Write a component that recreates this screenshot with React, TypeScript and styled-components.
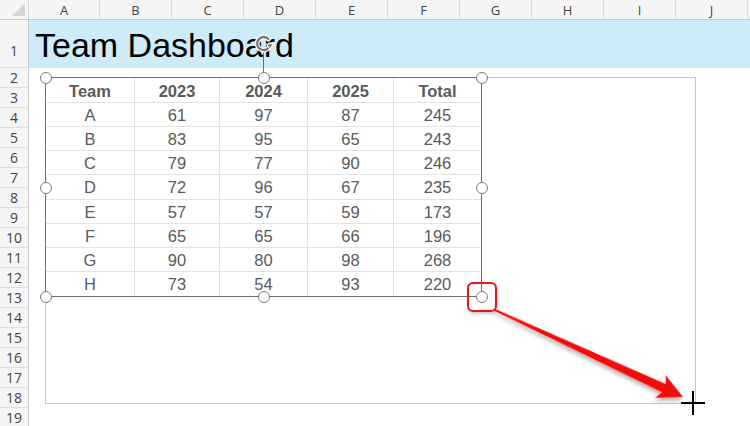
import styled, { createGlobalStyle } from 'styled-components';

const GlobalStyle = createGlobalStyle`
  html, body {
    margin: 0;
    padding: 0;
    background: #ffffff;
    overflow: hidden;
  }
  body {
    font-family: "Liberation Sans", Arial, sans-serif;
  }
  * { box-sizing: border-box; }
`;

const Sheet = styled.div`
  position: relative;
  width: 750px;
  height: 426px;
  overflow: hidden;
  display: flex;
  flex-direction: column;
  background: #ffffff;
`;

const HeaderRow = styled.div`
  display: flex;
  flex: none;
  height: 20px;
  background: #f5f5f5;
  border-bottom: 1px solid #c8c8c8;
`;

const Corner = styled.div`
  position: relative;
  flex: none;
  width: 29px;
  border-right: 1px solid #d6d6d6;

  &::after {
    content: '';
    position: absolute;
    right: 3px;
    bottom: 3px;
    width: 0;
    height: 0;
    border-left: 13px solid transparent;
    border-bottom: 13px solid #d7d7d7;
  }
`;

const ColHead = styled.div<{ $w: number }>`
  flex: none;
  width: ${({ $w }) => $w}px;
  display: flex;
  align-items: center;
  justify-content: center;
  border-right: 1px solid #dcdcdc;
  font-family: "Open Sans", "Noto Sans", sans-serif;
  font-size: 13px;
  color: #444444;
`;

const Row = styled.div<{ $h: number }>`
  display: flex;
  flex: none;
  height: ${({ $h }) => $h}px;
`;

const RowHead = styled.div<{ $tall?: boolean }>`
  flex: none;
  width: 29px;
  display: flex;
  justify-content: center;
  align-items: ${({ $tall }) => ($tall ? 'flex-end' : 'center')};
  padding-bottom: ${({ $tall }) => ($tall ? '7px' : '0')};
  background: #f5f5f5;
  border-right: 1px solid #c8c8c8;
  border-bottom: 1px solid #dedede;
  font-family: "Open Sans", "Noto Sans", sans-serif;
  font-size: 14px;
  line-height: 18px;
  color: #444444;
`;

const RowBody = styled.div<{ $fill?: string }>`
  flex: 1;
  display: flex;
  align-items: flex-end;
  background: ${({ $fill }) => $fill ?? '#ffffff'};
`;

const Title = styled.div`
  padding: 0 0 3px 6px;
  font-family: "Liberation Sans", Arial, sans-serif;
  font-size: 34px;
  line-height: 39px;
  color: #000000;
  white-space: nowrap;
`;

/* the outline Excel shows while the picture is dragged bigger */
const DragOutline = styled.div`
  position: absolute;
  left: 45px;
  top: 77px;
  width: 651px;
  height: 327px;
  border: 1px solid #c6c6c6;
`;

const Picture = styled.div`
  position: absolute;
  left: 45px;
  top: 77px;
  width: 437px;
  height: 220px;
  border: 1px solid #6e6e6e;
  background: #ffffff;
  display: grid;
  grid-template-columns: 89px 85px 88px 86px 1fr;
  grid-template-rows: 25px repeat(8, 1fr);
`;

const Cell = styled.div<{ $head?: boolean; $lastCol?: boolean; $lastRow?: boolean }>`
  display: flex;
  align-items: center;
  justify-content: center;
  padding-top: 2px;
  border-right: ${({ $lastCol }) => ($lastCol ? 'none' : '1px solid #e3e3e3')};
  border-bottom: ${({ $lastRow }) => ($lastRow ? 'none' : '1px solid #e3e3e3')};
  font-family: "Liberation Sans", Arial, sans-serif;
  font-size: 16.5px;
  font-weight: ${({ $head }) => ($head ? 700 : 400)};
  color: #5a5a5a;
`;

const Handle = styled.div<{ $x: number; $y: number }>`
  position: absolute;
  left: ${({ $x }) => $x - 5.5}px;
  top: ${({ $y }) => $y - 5.5}px;
  width: 12px;
  height: 12px;
  border-radius: 50%;
  border: 1.6px solid #7c7c7c;
  background: #ffffff;
`;

const RotateStem = styled.div`
  position: absolute;
  left: 263px;
  top: 50px;
  width: 1px;
  height: 27px;
  background: #6e6e6e;
`;

const RotateIcon = styled.svg`
  position: absolute;
  left: 253px;
  top: 33px;
  width: 21px;
  height: 21px;
  overflow: visible;
`;

const HighlightBox = styled.div`
  position: absolute;
  left: 467px;
  top: 282px;
  width: 30px;
  height: 30px;
  border: 2px solid #e8141b;
  border-radius: 6px;
  box-shadow: 1px 2px 3px rgba(0, 0, 0, 0.22), inset 0 0 4px rgba(0, 0, 0, 0.08);
`;

const Overlay = styled.svg`
  position: absolute;
  left: 0;
  top: 0;
  width: 750px;
  height: 426px;
  pointer-events: none;
`;

const columns: { label: string; width: number }[] = [
  { label: 'A', width: 71 },
  { label: 'B', width: 72 },
  { label: 'C', width: 72 },
  { label: 'D', width: 72 },
  { label: 'E', width: 72 },
  { label: 'F', width: 72 },
  { label: 'G', width: 72 },
  { label: 'H', width: 72 },
  { label: 'I', width: 72 },
  { label: 'J', width: 72 },
];

const headers = ['Team', '2023', '2024', '2025', 'Total'];

const data: (string | number)[][] = [
  ['A', 61, 97, 87, 245],
  ['B', 83, 95, 65, 243],
  ['C', 79, 77, 90, 246],
  ['D', 72, 96, 67, 235],
  ['E', 57, 57, 59, 173],
  ['F', 65, 65, 66, 196],
  ['G', 90, 80, 98, 268],
  ['H', 73, 54, 93, 220],
];

const handles = [
  [45, 77], [263, 77], [481, 77],
  [45, 187], [481, 187],
  [45, 296], [263, 296], [481, 296],
];

const rowNumbers = Array.from({ length: 18 }, (_, i) => i + 2);

// arrow drawn along +x, then rotated from the box corner toward the cursor
const ARROW_START = { x: 495, y: 310 };
const ARROW_TIP = { x: 683, y: 397 };
const arrowLen = Math.hypot(ARROW_TIP.x - ARROW_START.x, ARROW_TIP.y - ARROW_START.y);
const arrowAngle = (Math.atan2(ARROW_TIP.y - ARROW_START.y, ARROW_TIP.x - ARROW_START.x) * 180) / Math.PI;
const L = arrowLen;
const arrowPoints = [
  [0, -1],
  [L - 21, -4.5],
  [L - 25, -12.5],
  [L, 0],
  [L - 25, 12.5],
  [L - 21, 4.5],
  [0, 1],
]
  .map(([x, y]) => `${x.toFixed(1)},${y}`)
  .join(' ');

export default function App() {
  return (
    <>
      <GlobalStyle />
      <Sheet>
        <HeaderRow>
          <Corner />
          {columns.map((c) => (
            <ColHead key={c.label} $w={c.width}>
              {c.label}
            </ColHead>
          ))}
        </HeaderRow>

        <Row $h={48}>
          <RowHead $tall>1</RowHead>
          <RowBody $fill="#cdebf8">
            <Title>Team Dashboard</Title>
          </RowBody>
        </Row>

        {rowNumbers.map((n) => (
          <Row key={n} $h={20}>
            <RowHead>{n}</RowHead>
            <RowBody />
          </Row>
        ))}

        <DragOutline />

        <Picture>
          {headers.map((h, i) => (
            <Cell key={h} $head $lastCol={i === headers.length - 1}>
              {h}
            </Cell>
          ))}
          {data.map((row, r) =>
            row.map((v, c) => (
              <Cell
                key={`${r}-${c}`}
                $lastCol={c === row.length - 1}
                $lastRow={r === data.length - 1}
              >
                {v}
              </Cell>
            ))
          )}
        </Picture>

        <RotateStem />
        <RotateIcon viewBox="0 0 18 18">
          <g fill="none" strokeLinecap="round">
            <path d="M13.2 5.2 A5.6 5.6 0 1 0 14.6 10.2" stroke="#ffffff" strokeWidth="4.2" />
            <path d="M13.2 5.2 A5.6 5.6 0 1 0 14.6 10.2" stroke="#7a7a7a" strokeWidth="2" />
          </g>
          <polygon points="11.4,9.6 17.4,8.8 14.8,14" fill="#7a7a7a" stroke="#ffffff" strokeWidth="0.9" />
        </RotateIcon>

        {handles.map(([x, y]) => (
          <Handle key={`${x}-${y}`} $x={x} $y={y} />
        ))}

        <HighlightBox />

        <Overlay viewBox="0 0 750 426">
          <defs>
            <filter id="arrowShadow" x="-20%" y="-50%" width="140%" height="200%">
              <feDropShadow dx="1" dy="3" stdDeviation="2" floodColor="#000000" floodOpacity="0.3" />
            </filter>
          </defs>
          <g
            transform={`translate(${ARROW_START.x} ${ARROW_START.y}) rotate(${arrowAngle.toFixed(2)})`}
            filter="url(#arrowShadow)"
          >
            <polygon points={arrowPoints} fill="#f20d0d" />
          </g>
          <g stroke="#000000" strokeWidth="2">
            <line x1="681" y1="403" x2="705" y2="403" />
            <line x1="693" y1="391" x2="693" y2="415" />
          </g>
        </Overlay>
      </Sheet>
    </>
  );
}
